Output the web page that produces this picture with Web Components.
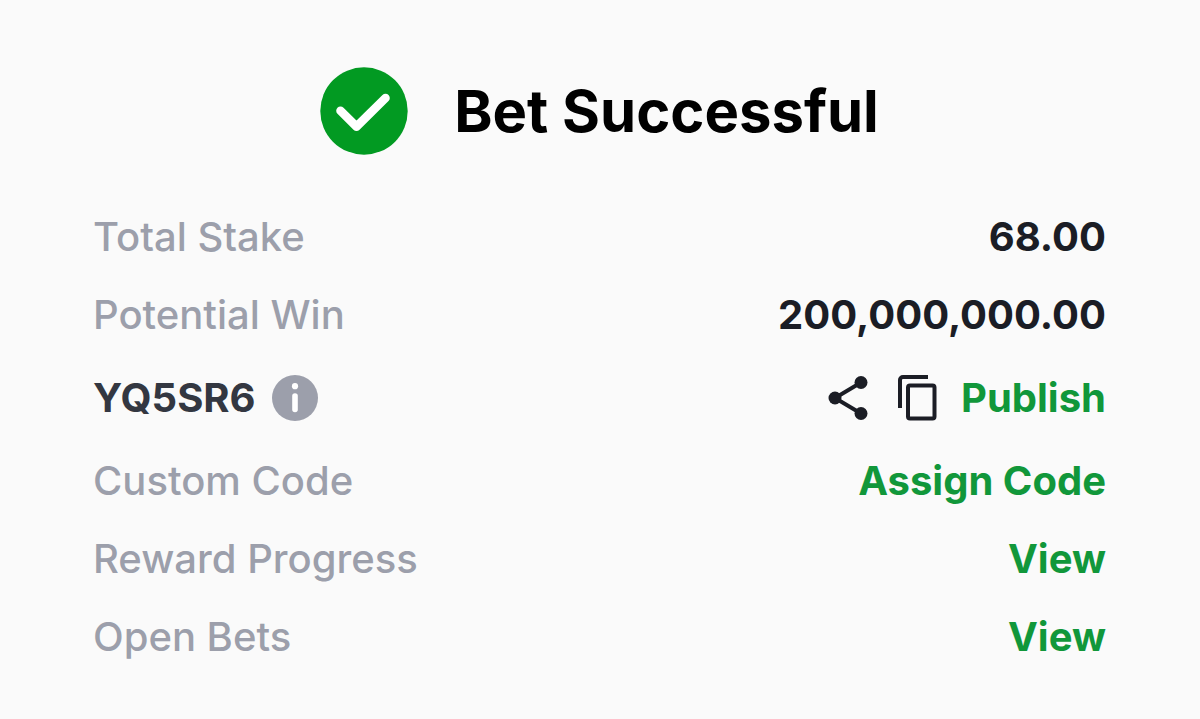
<!DOCTYPE html>
<html lang="en">
<head>
<meta charset="UTF-8">
<meta name="viewport" content="width=device-width, initial-scale=1">
<title>Bet Successful</title>
<style>
  body {
    margin: 0;
    background: #fafafa;
    font-family: Inter, "Liberation Sans", sans-serif;
  }
</style>
</head>
<body>
  <bet-receipt>
    <bet-status slot="header">Bet Successful</bet-status>
    <bet-row label="Total Stake">68.00</bet-row>
    <bet-row label="Potential Win">200,000,000.00</bet-row>
    <bet-code code="YQ5SR6"><bet-action>Publish</bet-action></bet-code>
    <bet-row label="Custom Code"><bet-action>Assign Code</bet-action></bet-row>
    <bet-row label="Reward Progress"><bet-action href="#rewards">View</bet-action></bet-row>
    <bet-row label="Open Bets"><bet-action href="#open-bets">View</bet-action></bet-row>
  </bet-receipt>

<script>
class BetReceipt extends HTMLElement {
  constructor() {
    super();
    this.attachShadow({ mode: 'open' });
  }

  connectedCallback() {
    this.shadowRoot.innerHTML = `
      <style>
        :host {
          display: block;
          box-sizing: border-box;
          padding: 67px 94px 56px 93px;
        }

        header {
          margin-bottom: 58px;
        }

        .rows {
          display: flex;
          flex-direction: column;
          gap: 30px;
        }
      </style>
      <header><slot name="header"></slot></header>
      <section class="rows"><slot></slot></section>
    `;
  }
}

class BetStatus extends HTMLElement {
  constructor() {
    super();
    this.attachShadow({ mode: 'open' });
  }

  connectedCallback() {
    this.shadowRoot.innerHTML = `
      <style>
        :host {
          display: flex;
          align-items: center;
          justify-content: center;
          gap: 46px;
        }

        svg {
          flex: none;
          width: 88px;
          height: 88px;
        }

        h1 {
          margin: 0;
          font-size: 58px;
          font-weight: 700;
          line-height: 72px;
          color: #000;
        }
      </style>
      <svg viewBox="0 0 88 88" aria-hidden="true">
        <circle cx="44" cy="44" r="43.7" fill="#029a22"/>
        <path d="M20.500 43.800 36.500 59.600 65.500 31" fill="none" stroke="#fff" stroke-width="8.6" stroke-linecap="round" stroke-linejoin="round"/>
      </svg>
      <h1><slot></slot></h1>
    `;
  }
}

class BetRow extends HTMLElement {
  constructor() {
    super();
    this.attachShadow({ mode: 'open' });
  }

  connectedCallback() {
    const label = this.getAttribute('label') || '';

    this.shadowRoot.innerHTML = `
      <style>
        :host {
          display: flex;
          align-items: center;
          justify-content: space-between;
          gap: 24px;
          font-size: 40px;
          line-height: 48px;
        }

        .label {
          font-weight: 500;
          color: #9c9fab;
        }

        .value {
          font-weight: 700;
          color: #1b1d25;
          text-align: right;
        }
      </style>
      <span class="label">${label}</span>
      <span class="value"><slot></slot></span>
    `;
  }
}

class BetCode extends HTMLElement {
  constructor() {
    super();
    this.attachShadow({ mode: 'open' });
  }

  connectedCallback() {
    const code = this.getAttribute('code') || '';

    this.shadowRoot.innerHTML = `
      <style>
        :host {
          display: flex;
          align-items: center;
          justify-content: space-between;
          gap: 24px;
          min-height: 58px;
          font-size: 40px;
          line-height: 48px;
        }

        .code, .tools {
          display: flex;
          align-items: center;
        }

        .code {
          gap: 15px;
          font-weight: 700;
          color: #333741;
        }

        .tools {
          gap: 20px;
        }

        button {
          display: block;
          padding: 0;
          border: 0;
          background: none;
          color: #1b1d25;
          cursor: pointer;
        }

        svg {
          display: block;
          height: 48px;
        }
      </style>
      <div class="code">
        <span>${code}</span>
        <button type="button" aria-label="About this code">
          <svg width="48" viewBox="0 0 48 48">
            <circle cx="24" cy="24" r="23" fill="#9c9fab"/>
            <circle cx="24" cy="12.2" r="3.1" fill="#fff"/>
            <path d="M24 22v13.500" stroke="#fff" stroke-width="5.6" stroke-linecap="round"/>
          </svg>
        </button>
      </div>
      <div class="tools">
        <button type="button" aria-label="Share">
          <svg width="48" viewBox="0 0 48 48" fill="currentColor">
            <path d="M36 8.500 10 24 36 39.500" fill="none" stroke="currentColor" stroke-width="4"/>
            <circle cx="10" cy="24" r="6.5"/>
            <circle cx="36" cy="8.5" r="6.5"/>
            <circle cx="36" cy="39.5" r="6.5"/>
          </svg>
        </button>
        <button type="button" aria-label="Copy">
          <svg width="48" viewBox="0 0 48 48" fill="none" stroke="currentColor" stroke-width="4">
            <path d="M7 34V6a3 3 0 0 1 3-3h25"/>
            <rect x="15" y="11.500" width="26.500" height="33" rx="2"/>
          </svg>
        </button>
        <slot></slot>
      </div>
    `;
  }
}

// Renders a link when it has an href, a button otherwise
class BetAction extends HTMLElement {
  constructor() {
    super();
    this.attachShadow({ mode: 'open' });
  }

  connectedCallback() {
    const href = this.getAttribute('href');

    this.shadowRoot.innerHTML = `
      <style>
        :host {
          display: block;
        }

        a, button {
          display: block;
          padding: 0;
          border: 0;
          background: none;
          font: inherit;
          font-weight: 700;
          color: #11973a;
          text-decoration: none;
          cursor: pointer;
        }
      </style>
      ${href
        ? `<a href="${href}"><slot></slot></a>`
        : '<button type="button"><slot></slot></button>'}
    `;
  }
}

customElements.define('bet-receipt', BetReceipt);
customElements.define('bet-status', BetStatus);
customElements.define('bet-row', BetRow);
customElements.define('bet-code', BetCode);
customElements.define('bet-action', BetAction);
</script>
</body>
</html>
